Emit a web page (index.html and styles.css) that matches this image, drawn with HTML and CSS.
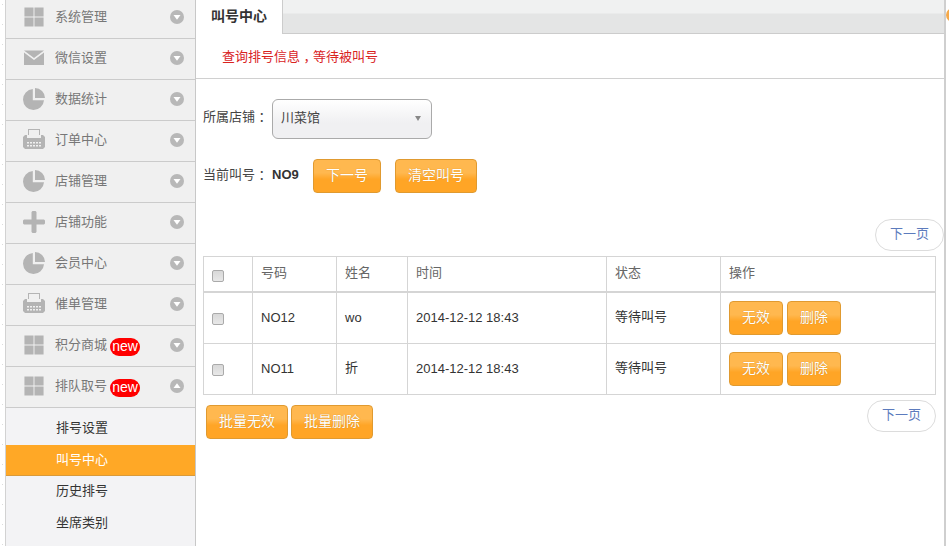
FILE: index.html
```html
<!DOCTYPE html>
<html lang="zh-CN">
<head>
<meta charset="utf-8">
<title>叫号中心</title>
<link rel="stylesheet" href="styles.css">
</head>
<body>
<svg class="defs" aria-hidden="true">
  <symbol id="i-grid" viewBox="-1.500 -1.500 23 23"><path d="M0 0h9.500v9.500H0zM10.500 0H20v9.500h-9.500zM0 10.500h9.500V20H0zM10.500 10.500H20V20h-9.500z"/></symbol>
  <symbol id="i-mail" viewBox="-1 -1 22 22"><path d="M0 2.500h20L10 10zM0 4.500l10 7.500 10-7.500V17H0z"/></symbol>
  <symbol id="i-pie" viewBox="0 0 22 22"><path d="M9.800 1v11.200H21A10.500 10.500 0 1 1 9.800 1zM12 0a10 10 0 0 1 10 10H12z"/></symbol>
  <symbol id="i-print" viewBox="0 0 22 22"><path fill-rule="evenodd" d="M5 0h12v6h-1V1H6v5H5zM2 6h2v3h14V6h2l2 2v10l-2 2H2L0 18V8zM4 13v1.500h2V13zm3 0v1.500h2V13zm3 0v1.500h2V13zm3 0v1.500h2V13zm3 0v1.500h2V13zM4 16v1.500h2V16zm3 0v1.500h2V16zm3 0v1.500h2V16zm3 0v1.500h2V16zm3 0v1.500h2V16z"/></symbol>
  <symbol id="i-plus" viewBox="0 0 22 22"><path d="M9.500 0h3l1 1v7.500h7.500l1 1v3l-1 1h-7.500V21l-1 1h-3l-1-1v-7.500H1l-1-1v-3l1-1h7.500V1z"/></symbol>
  <symbol id="i-down" viewBox="0 0 14 14"><circle cx="7" cy="7" r="7"/><path class="tri" d="M3.500 5h7L7 9.800z"/></symbol>
  <symbol id="i-up" viewBox="0 0 14 14"><circle cx="7" cy="7" r="7"/><path class="tri" d="M3.500 9h7L7 4.200z"/></symbol>
</svg>
<div class="page">
  <aside class="sidebar">
    <ul class="menu">
      <li class="menu-item"><svg class="ico"><use href="#i-grid"/></svg><span class="menu-label">系统管理</span><svg class="chev"><use href="#i-down"/></svg></li>
      <li class="menu-item"><svg class="ico"><use href="#i-mail"/></svg><span class="menu-label">微信设置</span><svg class="chev"><use href="#i-down"/></svg></li>
      <li class="menu-item"><svg class="ico"><use href="#i-pie"/></svg><span class="menu-label">数据统计</span><svg class="chev"><use href="#i-down"/></svg></li>
      <li class="menu-item"><svg class="ico"><use href="#i-print"/></svg><span class="menu-label">订单中心</span><svg class="chev"><use href="#i-down"/></svg></li>
      <li class="menu-item"><svg class="ico"><use href="#i-pie"/></svg><span class="menu-label">店铺管理</span><svg class="chev"><use href="#i-down"/></svg></li>
      <li class="menu-item"><svg class="ico"><use href="#i-plus"/></svg><span class="menu-label">店铺功能</span><svg class="chev"><use href="#i-down"/></svg></li>
      <li class="menu-item"><svg class="ico"><use href="#i-pie"/></svg><span class="menu-label">会员中心</span><svg class="chev"><use href="#i-down"/></svg></li>
      <li class="menu-item"><svg class="ico"><use href="#i-print"/></svg><span class="menu-label">催单管理</span><svg class="chev"><use href="#i-down"/></svg></li>
      <li class="menu-item"><svg class="ico"><use href="#i-grid"/></svg><span class="menu-label">积分商城</span><span class="badge">new</span><svg class="chev"><use href="#i-down"/></svg></li>
      <li class="menu-item"><svg class="ico"><use href="#i-grid"/></svg><span class="menu-label">排队取号</span><span class="badge">new</span><svg class="chev"><use href="#i-up"/></svg></li>
    </ul>
    <ul class="submenu">
      <li class="sub-item">排号设置</li>
      <li class="sub-item active">叫号中心</li>
      <li class="sub-item">历史排号</li>
      <li class="sub-item">坐席类别</li>
    </ul>
  </aside>
  <main class="main">
    <div class="tabbar"><div class="tab">叫号中心</div><div class="tab-fill"></div></div>
    <p class="intro">查询排号信息<span class="punct">，</span>等待被叫号</p>
    <div class="content">
      <div class="store-row">
        <span class="label">所属店铺<span class="punct">：</span></span>
        <div class="select"><span class="select-text">川菜馆</span><i class="caret"></i></div>
      </div>
      <div class="call-row">
        <span class="label">当前叫号<span class="punct">：</span></span><strong class="current">NO9</strong>
        <button class="btn btn-next">下一号</button>
        <button class="btn btn-clear">清空叫号</button>
      </div>
      <div class="pager-top"><a class="pill">下一页</a></div>
      <table class="grid">
        <colgroup><col class="c1"><col class="c2"><col class="c3"><col class="c4"><col class="c5"><col class="c6"></colgroup>
        <thead>
          <tr><th><input class="check" type="checkbox"></th><th>号码</th><th>姓名</th><th>时间</th><th>状态</th><th>操作</th></tr>
        </thead>
        <tbody>
          <tr><td><input class="check" type="checkbox"></td><td>NO12</td><td>wo</td><td>2014-12-12 18:43</td><td class="cjk">等待叫号</td><td><div class="ops"><button class="btn btn-op">无效</button><button class="btn btn-op">删除</button></div></td></tr>
          <tr><td><input class="check" type="checkbox"></td><td>NO11</td><td class="cjk">折</td><td>2014-12-12 18:43</td><td class="cjk">等待叫号</td><td><div class="ops"><button class="btn btn-op">无效</button><button class="btn btn-op">删除</button></div></td></tr>
        </tbody>
      </table>
      <div class="foot-row">
        <div class="batch"><button class="btn btn-batch">批量无效</button><button class="btn btn-batch">批量删除</button></div>
        <a class="pill">下一页</a>
      </div>
    </div>
  </main>
  <span class="corner-dot"></span>
</div>
</body>
</html>
```
FILE: styles.css
```css
* { box-sizing: border-box; }
html, body { margin: 0; padding: 0; height: 100%; overflow: hidden; background: #fff; }
body { font: 13px "Liberation Sans", "Noto Sans CJK SC", sans-serif; color: #333; }
ul { list-style: none; margin: 0; padding: 0; }
.defs { position: absolute; width: 0; height: 0; }
.page { display: flex; height: 546px; padding-left: 5px; position: relative; overflow: hidden; background: linear-gradient(#dcdcdc 1px, transparent 1px) 2px 4px / 1px 20px repeat-y; }
.punct { font-feature-settings: "halt"; padding: 0 3px 0 3.500px; }

.sidebar { width: 191px; flex: none; background: #f3f3f5; border-left: 1px solid #d2d2d2; border-right: 1px solid #c8c8c8; }
.menu { margin-top: -2px; }
.menu-item { height: 41px; display: flex; align-items: center; background: #f0f0f0; border-bottom: 1px solid #cbcbcb; color: #777; padding: 0 0 2px 17px; }
.ico { width: 22px; height: 22px; margin-top: -1px; fill: #b4b4b4; flex: none; }
.menu-label { margin-left: 10px; margin-top: -3px; }
.badge { margin: 4px 0 0 3px; height: 18px; width: 30px; border-radius: 9px; background: #f00; color: #fff; font-size: 14px; line-height: 17px; text-align: center; }
.chev { width: 14px; height: 14px; margin-left: auto; margin-right: 11px; fill: #b8b8b8; flex: none; }
.tri { fill: #fff; }

.submenu { padding-top: 5px; }
.sub-item { height: 31.500px; line-height: 30px; padding-left: 50px; color: #333; }
.sub-item.active { background: #ffa826; color: #fff; border-bottom: 1px solid #d99a3a; }

.main { width: 750px; flex: none; border-right: 2px solid #cfcfcf; }
.tabbar { display: flex; height: 34px; }
.tab { width: 87px; padding: 5px 0 0 15px; font-size: 14px; font-weight: bold; color: #333; background: #fff; border-right: 1px solid #ccc; }
.tab-fill { flex: 1; background: linear-gradient(#f0f1f1 13px, #e4e5e5 14px); border-bottom: 1px solid #ccc; }
.intro { margin: 0; height: 45px; padding: 14px 0 0 26px; color: #d9231f; border-bottom: 1px solid #d0d0d0; line-height: 18px; }

.content { padding-left: 7px; }
.store-row { display: flex; align-items: center; margin-top: 20px; height: 40px; }
.label { color: #444; width: 69px; flex: none; margin-top: -6px; }
.store-row .label { margin-top: -8px; }
.select { width: 160px; height: 40px; border: 1px solid #aaa; border-radius: 6px; background: linear-gradient(#fff, #f0f0f2 60%); display: flex; align-items: center; justify-content: space-between; padding: 0 10px 0 8px; color: #444; }
.select-text { margin-top: -6px; }
.caret { width: 0; height: 0; margin-top: -2px; border: 3px solid transparent; border-top: 5px solid #888; border-bottom: 0; }

.call-row { display: flex; align-items: center; margin-top: 20px; height: 34px; }
.current { width: 41px; flex: none; color: #333; margin-top: -4px; }
.btn { font: inherit; font-size: 14px; color: #fff; height: 34px; padding: 0 0 4px; border: 1px solid #e09a30; border-radius: 4px; background: linear-gradient(#ffb84f 0, #ffb84f 40%, #ffa526 60%, #ffa526 100%); text-shadow: 0 0 1px #c77f10; }
.btn-next { width: 68px; }
.btn-clear { width: 82px; margin-left: 14px; }
.btn-op { width: 54px; }
.btn-batch { width: 82px; }

.pager-top { display: flex; justify-content: flex-end; margin-top: 26px; }
.pill { display: block; width: 69px; height: 32px; line-height: 27px; text-align: center; border: 1px solid #dcdcdc; border-radius: 16px; color: #5c7bbd; background: #fff; }

.grid { margin-top: 5px; width: 733px; table-layout: fixed; border-collapse: separate; border-spacing: 0; border-top: 1px solid #d5d5d5; border-left: 1px solid #d5d5d5; }
.c1 { width: 49px; } .c2 { width: 84px; } .c3 { width: 71px; } .c4 { width: 199px; } .c5 { width: 114px; } .c6 { width: 215px; }
.grid th, .grid td { padding: 0 0 2px 8px; text-align: left; border-right: 1px solid #d5d5d5; border-bottom: 1px solid #d5d5d5; }
.grid th { height: 36px; padding-bottom: 6px; font-weight: normal; color: #666; border-bottom-width: 2px; }
.grid td { height: 51px; color: #333; }
.grid td.cjk { padding-bottom: 5px; }
.grid th .check { margin: 9px 0 0; }
.grid td .check { margin: 3px 0 0; }
.check { appearance: none; display: block; width: 12px; height: 12px; border: 1px solid #aaa; border-radius: 2px; background: linear-gradient(#d8d8d8, #e8e8e8); }
.ops { display: flex; gap: 4px; padding-top: 2px; }

.foot-row { width: 733px; display: flex; justify-content: space-between; align-items: flex-start; padding-top: 5px; }
.batch { display: flex; gap: 3px; margin: 5px 0 0 3px; }

.corner-dot { position: absolute; left: 946px; top: 8px; width: 14px; height: 14px; border-radius: 50%; background: #f5a94a; }
```
